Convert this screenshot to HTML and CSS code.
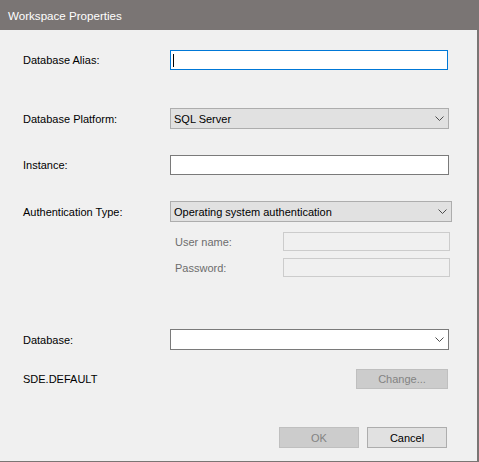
FILE: index.html
```html
<!DOCTYPE html>
<html>
<head>
<meta charset="utf-8">
<link rel="stylesheet" href="styles.css">
</head>
<body>
<div class="window">
  <div class="titlebar">Workspace Properties</div>
  <div class="content">
    <div class="row r1">
      <span class="label">Database Alias:</span>
      <div class="field focus w278 h20"><span class="caret"></span></div>
    </div>
    <div class="row r2">
      <span class="label">Database Platform:</span>
      <div class="field combo w279 h21"><span class="ctext">SQL Server</span><svg class="chev" width="9" height="5" viewBox="0 0 9 5"><path d="M0.5 0.5 L4.5 4.5 L8.5 0.5" fill="none" stroke="#4d4d4d" stroke-width="1"/></svg></div>
    </div>
    <div class="row r3">
      <span class="label">Instance:</span>
      <div class="field text w279 h20"></div>
    </div>
    <div class="row r4">
      <span class="label">Authentication Type:</span>
      <div class="field combo w282 h21"><span class="ctext">Operating system authentication</span><svg class="chev" width="9" height="5" viewBox="0 0 9 5"><path d="M0.5 0.5 L4.5 4.5 L8.5 0.5" fill="none" stroke="#4d4d4d" stroke-width="1"/></svg></div>
    </div>
    <div class="subrow s1">
      <span class="sublabel">User name:</span>
      <div class="field disabled w167 h19"></div>
    </div>
    <div class="subrow s2">
      <span class="sublabel">Password:</span>
      <div class="field disabled w167 h19"></div>
    </div>
    <div class="row r5">
      <span class="label">Database:</span>
      <div class="field text combo-white w279 h21"><svg class="chev" width="9" height="5" viewBox="0 0 9 5"><path d="M0.5 0.5 L4.5 4.5 L8.5 0.5" fill="none" stroke="#4d4d4d" stroke-width="1"/></svg></div>
    </div>
    <div class="row r6">
      <span class="version">SDE.DEFAULT</span>
      <button class="btn btn-disabled change">Change...</button>
    </div>
    <div class="buttons">
      <button class="btn btn-disabled dlg">OK</button>
      <button class="btn btn-normal dlg">Cancel</button>
    </div>
  </div>
</div>
</body>
</html>
```
FILE: styles.css
```css
* { box-sizing: border-box; }
html, body { margin: 0; padding: 0; }
body {
  width: 479px;
  height: 462px;
  overflow: hidden;
  font-family: "Liberation Sans", Arial, sans-serif;
  font-size: 11px;
  color: #000;
  background: #f0f0f0;
}
.window {
  width: 479px;
  height: 462px;
  background: #f0f0f0;
  border-right: 2px solid #7a7574;
  border-bottom: 1px solid #7a7574;
  display: flex;
  flex-direction: column;
}
.titlebar {
  height: 30px;
  margin-right: -2px;
  background: #7a7574;
  color: #ffffff;
  font-size: 11.6px;
  padding-left: 8px;
  display: flex;
  align-items: center;
}
.content {
  display: flex;
  flex-direction: column;
}
.row {
  display: flex;
  align-items: center;
  padding-left: 23px;
}
.label {
  width: 147px;
  flex: none;
}
.r1 { margin-top: 20px; }
.r2 { margin-top: 38px; }
.r3 { margin-top: 26px; }
.r4 { margin-top: 26px; }
.s1 { margin-top: 10px; }
.s2 { margin-top: 7px; }
.r5 { margin-top: 52px; }
.r6 { margin-top: 19px; height: 20px; }
.subrow {
  display: flex;
  align-items: center;
  padding-left: 175px;
}
.sublabel {
  width: 108px;
  flex: none;
  color: #6d6d6d;
}
.field {
  position: relative;
  display: flex;
  align-items: center;
  flex: none;
}
.w278 { width: 278px; }
.w279 { width: 279px; }
.w282 { width: 282px; }
.w167 { width: 167px; }
.h19 { height: 19px; }
.h20 { height: 20px; }
.h21 { height: 21px; }
.focus {
  background: #ffffff;
  border: 1px solid #0078d7;
}
.caret {
  width: 1px;
  height: 13px;
  background: #000;
  margin-left: 2px;
}
.text {
  background: #ffffff;
  border: 1px solid #7a7a7a;
}
.combo {
  background: #e1e1e1;
  border: 1px solid #adadad;
  justify-content: space-between;
  padding-left: 3px;
  padding-right: 4px;
}
.combo-white {
  justify-content: flex-end;
  padding-right: 4px;
}
.chev { display: block; }
.disabled {
  background: #f0f0f0;
  border: 1px solid #cccccc;
}
.version { width: 333px; flex: none; }
.btn {
  font-family: "Liberation Sans", Arial, sans-serif;
  font-size: 11px;
  height: 21px;
  padding: 0;
  margin: 0;
  border-radius: 0;
  display: flex;
  align-items: center;
  justify-content: center;
}
.change { width: 92px; height: 20px; }
.btn-disabled {
  background: #cccccc;
  border: 1px solid #bfbfbf;
  color: #838383;
}
.btn-normal {
  background: #e1e1e1;
  border: 1px solid #adadad;
  color: #000;
}
.buttons {
  display: flex;
  gap: 8px;
  margin-top: 38px;
  padding-left: 279px;
}
.dlg { width: 80px; }
```
